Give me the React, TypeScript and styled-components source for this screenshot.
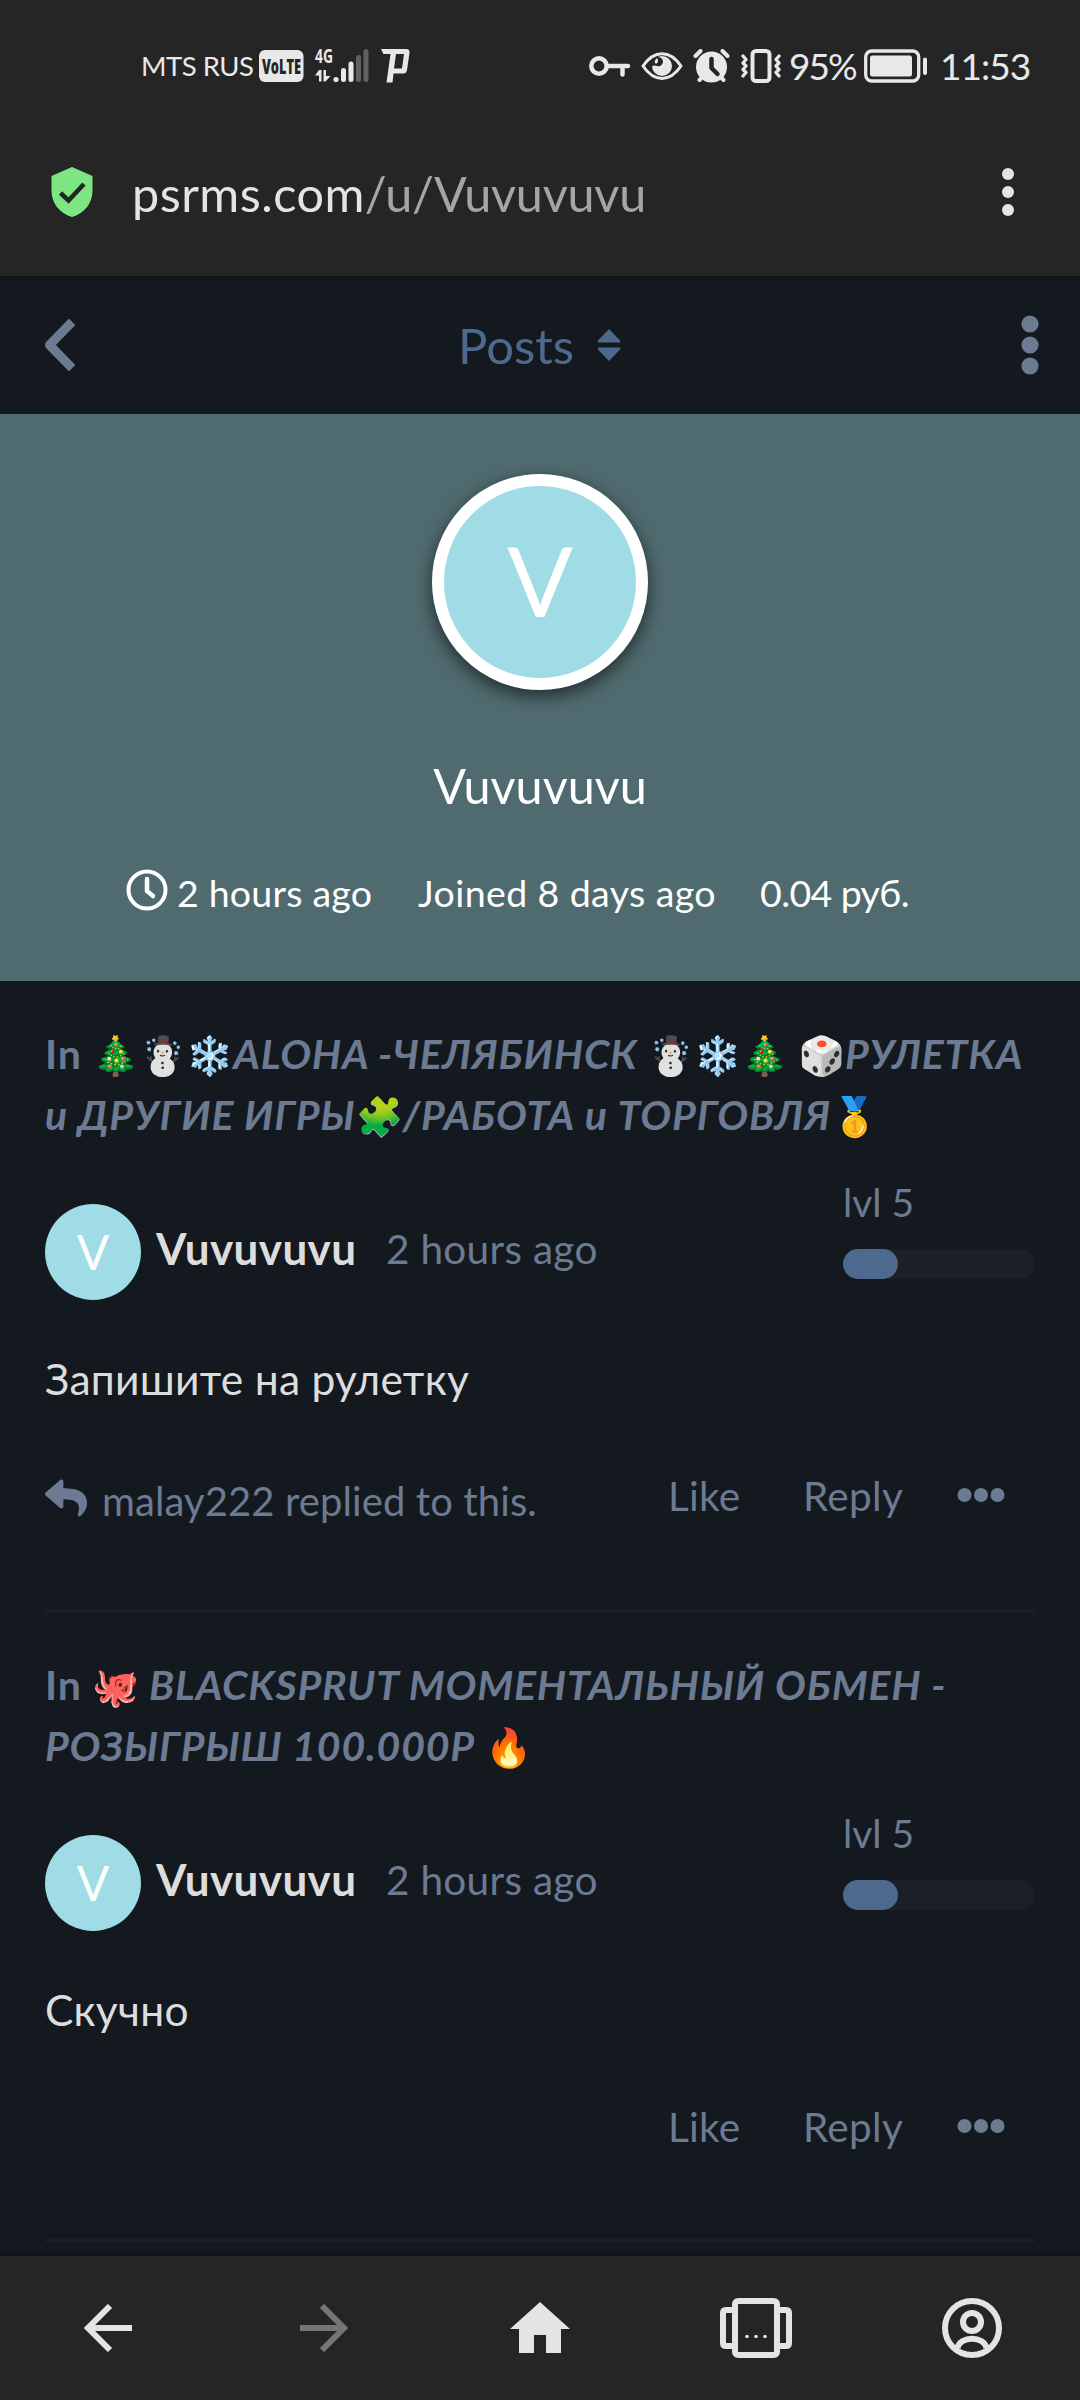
import type { ReactNode } from 'react';
import styled, { createGlobalStyle } from 'styled-components';

const GlobalStyle = createGlobalStyle`
  * {
    box-sizing: border-box;
  }
  body {
    margin: 0;
    background: #14191f;
    font-family: Lato, 'Noto Sans', sans-serif;
  }
  svg {
    display: block;
    flex-shrink: 0;
  }
`;

const Screen = styled.div`
  width: 1080px;
  height: 2400px;
  display: flex;
  flex-direction: column;
  overflow: hidden;
`;

const TopBar = styled.header`
  height: 276px;
  flex-shrink: 0;
  background: #252525;
  box-shadow: 0 0 5px rgba(0, 0, 0, 0.5);
  z-index: 1;
`;

const StatusBar = styled.div`
  height: 132px;
  padding: 0 50px 0 141px;
  display: flex;
  justify-content: space-between;
  align-items: center;
  color: #e8e8e8;
`;

const StatusGroup = styled.div`
  display: flex;
  align-items: center;
`;

const StatusIcons = styled.div`
  margin-right: 7px;
  display: flex;
  align-items: center;
  gap: 10px;
`;

const StatusText = styled.span<{ $size: number; $spacing?: number; $width: number }>`
  width: ${p => p.$width}px;
  font-size: ${p => p.$size}px;
  letter-spacing: ${p => p.$spacing || 0}px;
  line-height: 40px;
  white-space: nowrap;
`;

const AddressBar = styled.div`
  height: 144px;
  padding: 0 60px 0 51px;
  display: flex;
  align-items: flex-start;
`;

const ShieldIcon = styled.svg`
  margin-top: 35px;
`;

const Url = styled.div`
  flex: 1;
  margin: 26px 0 0 39px;
  font-size: 48.5px;
  letter-spacing: 0.5px;
  line-height: 70px;
  color: #e4e4e4;
  span {
    letter-spacing: -0.2px;
    color: #a5a5a5;
  }
`;

const MenuIcon = styled.svg`
  margin-top: 36px;
`;

const Toolbar = styled.nav`
  height: 138px;
  flex-shrink: 0;
  padding: 0 41px 0 42px;
  display: grid;
  grid-template-columns: 1fr auto 1fr;
  align-items: center;
  svg:last-child {
    justify-self: end;
  }
`;

const SectionButton = styled.button`
  border: none;
  background: none;
  padding: 0 1px 0 0;
  display: flex;
  align-items: center;
  gap: 22px;
  font-family: inherit;
  font-size: 49px;
  line-height: 60px;
  color: #4d698e;
`;

const Hero = styled.section`
  height: 567px;
  flex-shrink: 0;
  padding-top: 60px;
  display: flex;
  flex-direction: column;
  align-items: center;
  background: #506b6f;
  color: #fff;
`;

const Avatar = styled.div<{ $large?: boolean }>`
  width: ${p => (p.$large ? 216 : 96)}px;
  height: ${p => (p.$large ? 216 : 96)}px;
  flex-shrink: 0;
  border-radius: 50%;
  border: ${p => (p.$large ? '12px solid #fff' : 'none')};
  box-shadow: ${p => (p.$large ? '0 6px 18px rgba(0, 0, 0, 0.6)' : 'none')};
  background: #a0dce5;
  color: #fff;
  font-size: ${p => (p.$large ? 97 : 48)}px;
  line-height: ${p => (p.$large ? 188 : 95)}px;
  text-align: center;
`;

const HeroName = styled.h1`
  margin: 60px 0 0;
  font-size: 48.5px;
  font-weight: 400;
  line-height: 70px;
`;

const HeroInfo = styled.ul`
  width: 100%;
  margin: 37px 0 0;
  padding: 0 0 0 126px;
  display: flex;
  list-style: none;
  font-size: 37.5px;
  line-height: 60px;
  white-space: nowrap;
`;

const InfoItem = styled.li<{ $width: number; $spacing?: number }>`
  width: ${p => p.$width}px;
  padding-top: 6px;
  letter-spacing: ${p => p.$spacing || 0}px;
  display: flex;
  align-items: flex-start;
  gap: 9px;
  svg {
    margin-top: 6px;
  }
`;

const PostList = styled.main`
  flex: 1;
  min-height: 0;
  padding: 0 45px;
  overflow: hidden;
`;

const PostItem = styled.article`
  height: 630px;
  padding-top: 42px;
  border-bottom: 3px solid #1b1f27;
  color: #6c7b92;
  &:first-child {
    height: 631px;
  }
`;

const Discussion = styled.h3`
  margin: 0;
  font-size: 41px;
  font-weight: 700;
  letter-spacing: 0.8px;
  line-height: 61px;
  white-space: nowrap;
`;

const Emoji = styled.span`
  font-size: 38px;
  font-style: normal;
  letter-spacing: 0;
  line-height: 0;
`;

const PostHeader = styled.div`
  height: 122px;
  margin-top: 33px;
  display: flex;
  align-items: flex-end;
`;

const PostUser = styled.span`
  width: 230px;
  margin: 0 0 22px 15px;
  font-size: 44px;
  font-weight: 700;
  letter-spacing: 0.4px;
  line-height: 60px;
  color: #ddd;
`;

const PostTime = styled.time`
  flex: 1;
  margin-bottom: 21px;
  font-size: 40.5px;
  letter-spacing: 0.3px;
  line-height: 60px;
`;

const Level = styled.div`
  width: 192px;
  align-self: flex-start;
  font-size: 39px;
  line-height: 48px;
`;

const Track = styled.div`
  height: 30px;
  margin-top: 23px;
  border-radius: 15px;
  background: #1b1f27;
`;

const Fill = styled.div`
  height: 100%;
  border-radius: 15px;
  background: #4d698e;
`;

const PostBody = styled.p`
  margin: 49px 0 0;
  font-size: 42.5px;
  letter-spacing: 0.3px;
  line-height: 60px;
  color: #ddd;
`;

const PostFooter = styled.footer`
  height: 66px;
  margin-top: 57px;
  display: flex;
  align-items: flex-start;
  font-size: 40px;
  line-height: 60px;
`;

const RepliedBy = styled.div`
  flex: 1;
  display: flex;
  align-items: flex-start;
  gap: 15px;
  letter-spacing: 0.1px;
  svg {
    margin-top: 11px;
  }
  span {
    margin-top: 5px;
  }
`;

const Action = styled.button<{ $width: number }>`
  width: ${p => p.$width}px;
  border: none;
  background: none;
  padding: 0;
  font: inherit;
  font-size: 40.5px;
  letter-spacing: 0.3px;
  text-align: left;
  color: inherit;
`;

const DotsIcon = styled.svg`
  margin: 21px 30px 0 0;
`;

const BottomBar = styled.footer`
  height: 144px;
  flex-shrink: 0;
  display: grid;
  grid-template-columns: repeat(5, 1fr);
  place-items: center;
  background: #252525;
  box-shadow: 0 0 5px rgba(0, 0, 0, 0.5);
  z-index: 1;
`;

interface Post {
  title: ReactNode;
  text: string;
  repliedBy?: string;
}

const posts: Post[] = [
  {
    title: (
      <>
        In <i><Emoji>🎄☃️❄️</Emoji>ALOHA -ЧЕЛЯБИНСК <Emoji>☃️❄️🎄</Emoji> <Emoji>🎲</Emoji>РУЛЕТКА<br />
        и ДРУГИЕ ИГРЫ<Emoji>🧩</Emoji>/РАБОТА и ТОРГОВЛЯ<Emoji>🥇</Emoji></i>
      </>
    ),
    text: 'Запишите на рулетку',
    repliedBy: 'malay222',
  },
  {
    title: (
      <>
        In <i><Emoji>🐙</Emoji> BLACKSPRUT МОМЕНТАЛЬНЫЙ ОБМЕН -<br />
        РОЗЫГРЫШ 100.000Р <Emoji>🔥</Emoji></i>
      </>
    ),
    text: 'Скучно',
  },
];

const levelProgress = 28.5;

const SignalIcons = () => (
  <svg width="154" height="50" viewBox="0 -7 154 50" fill="#e8e8e8">
    <rect x="0" y="2" width="44.5" height="32" rx="6" />
    <text transform="translate(3 25.5) scale(.65 1)" fontFamily="'Open Sans'" fontSize="20.5" fontWeight="800" fill="#252525" textLength="60" lengthAdjust="spacingAndGlyphs">VoLTE</text>
    <text transform="translate(56 15) scale(.68 1)" fontFamily="'Open Sans'" fontSize="20" fontWeight="700" textLength="26.5" lengthAdjust="spacingAndGlyphs">4G</text>
    <path d="M60 22h2.500v11.500h-2.500v-6h-4zM64.500 22h2.500v6h4.500l-5 5.500h-2z" />
    <circle cx="77" cy="31.500" r="2.600" />
    <rect x="82" y="20" width="5" height="14" rx="2.500" />
    <rect x="89.500" y="13.500" width="5" height="20.500" rx="2.500" />
    <rect x="97" y="7" width="5" height="27" rx="2.500" fill="#616161" />
    <rect x="104.500" y="1" width="5" height="33" rx="2.500" fill="#616161" />
    <path d="M122 1h25q4 0 3.500 4l-2.500 17q-.500 3.500-4 3.500h-9.500l-1 9h-6l4-28.500h-7zM137 6l-2 14.500h8l2-14.500z" fillRule="evenodd" />
  </svg>
);

const KeyIcon = () => (
  <svg width="42" height="34" viewBox="0 0 42 34" fill="none" stroke="#e8e8e8" strokeWidth="4.500">
    <circle cx="10" cy="17" r="7.700" />
    <path d="M18 17h21M33.500 17v8.500" strokeLinecap="round" />
  </svg>
);

const EyeIcon = () => (
  <svg width="42" height="34" viewBox="0 0 42 34">
    <path d="M2 17C13 .5 29 .5 40 17C29 33.500 13 33.500 2 17z" fill="none" stroke="#e8e8e8" strokeWidth="3" strokeLinejoin="round" />
    <circle cx="21" cy="17" r="10" fill="#e8e8e8" />
    <path d="M15.500 8Q22 8 22 13Q21 18 16 17Q12.500 16 11 17.500Q10.500 12 15.500 8z" fill="#252525" />
    <path d="M16 9q2.500 3.500-1 6q-3-2.500 1-6z" fill="#e8e8e8" />
  </svg>
);

const AlarmIcon = () => (
  <svg width="37" height="34" viewBox="0 0 37 34">
    <circle cx="18.500" cy="18" r="15.500" fill="#e8e8e8" />
    <path d="M2.500 7l5-5M34.500 7l-5-5M6.500 31l3-3M30.500 31l-3-3" stroke="#e8e8e8" strokeWidth="4" strokeLinecap="round" />
    <path d="M18.500 10v9l6 6" fill="none" stroke="#252525" strokeWidth="4.500" strokeLinecap="round" strokeLinejoin="round" />
  </svg>
);

const VibrateIcon = () => (
  <svg width="42" height="34" viewBox="0 0 42 34" fill="none" stroke="#e8e8e8">
    <rect x="12.500" y="2" width="17" height="30" rx="3.500" strokeWidth="4" />
    <path d="M3 7l3 3.500l-3 3.500l3 3l-3 3.500l3 3l-3 3.500M39 7l-3 3.500l3 3.500l-3 3l3 3.500l-3 3l3 3.500" strokeWidth="3.300" strokeLinecap="round" strokeLinejoin="round" />
  </svg>
);

const BatteryIcon = () => (
  <svg width="76" height="34" viewBox="0 0 76 34">
    <rect x="1.700" y="2" width="53" height="30" rx="6" fill="none" stroke="#e8e8e8" strokeWidth="3.300" />
    <rect x="6" y="6.500" width="42" height="21" rx="2.500" fill="#e8e8e8" />
    <rect x="59" y="8.500" width="4" height="17.500" rx="2" fill="#e8e8e8" />
  </svg>
);

const PostCard = ({ post }: { post: Post }) => (
  <PostItem>
    <Discussion>{post.title}</Discussion>
    <PostHeader>
      <Avatar>V</Avatar>
      <PostUser>Vuvuvuvu</PostUser>
      <PostTime>2 hours ago</PostTime>
      <Level>
        lvl 5
        <Track>
          <Fill style={{ width: `${levelProgress}%` }} />
        </Track>
      </Level>
    </PostHeader>
    <PostBody>{post.text}</PostBody>
    <PostFooter>
      <RepliedBy>
        {post.repliedBy && (
          <>
            <svg width="42" height="42" viewBox="0 0 512 512" fill="currentColor">
              <path d="M8.300 189.800L184.300 37.900C199.700 24.500 224 35.300 224 56v80.100c160.600 1.800 288 34 288 186.300 0 61.400-39.600 122.300-83.300 154.100-13.700 9.900-33.100-2.500-28.100-18.600C446 312.900 379.100 274.300 224 272.100V360c0 20.700-24.300 31.500-39.700 18.200l-176-152c-11.100-9.600-11.100-26.800 0-36.400z" />
            </svg>
            <span>{post.repliedBy} replied to this.</span>
          </>
        )}
      </RepliedBy>
      <Action $width={135}>Like</Action>
      <Action $width={154}>Reply</Action>
      <DotsIcon width="48" height="16" viewBox="0 0 48 16" fill="currentColor">
        <circle cx="7.500" cy="8" r="7" />
        <circle cx="24" cy="8" r="7" />
        <circle cx="40.500" cy="8" r="7" />
      </DotsIcon>
    </PostFooter>
  </PostItem>
);

const App = () => {
  return (
    <Screen>
      <GlobalStyle />
      <TopBar>
        <StatusBar>
          <StatusGroup>
            <StatusText $size={27.500} $width={118} $spacing={-0.500}>MTS RUS</StatusText>
            <SignalIcons />
          </StatusGroup>
          <StatusGroup>
            <StatusIcons>
              <KeyIcon />
              <EyeIcon />
              <AlarmIcon />
              <VibrateIcon />
            </StatusIcons>
            <StatusText $size={37} $width={75} $spacing={-2}>95%</StatusText>
            <BatteryIcon />
            <StatusText $size={37} $width={90} $spacing={-1}>11:53</StatusText>
          </StatusGroup>
        </StatusBar>
        <AddressBar>
          <ShieldIcon width="42" height="50" viewBox="0 0 42 50">
            <path d="M21 0L41.500 9V24C41.500 36 33 47 21 50C9 47 .500 36 .500 24V9z" fill="#7de683" />
            <path d="M9.500 26l8 7.500L33 17" fill="none" stroke="#252525" strokeWidth="4.500" />
          </ShieldIcon>
          <Url>psrms.com<span>/u/Vuvuvuvu</span></Url>
          <MenuIcon width="24" height="48" viewBox="0 0 24 48" fill="#e4e4e4">
            <circle cx="12" cy="6" r="6" />
            <circle cx="12" cy="24" r="6" />
            <circle cx="12" cy="42" r="6" />
          </MenuIcon>
        </AddressBar>
      </TopBar>
      <Toolbar>
        <svg width="34" height="52" viewBox="0 0 34 52" fill="none">
          <path d="M27 6L7.500 26L27 46" stroke="#6c7b92" strokeWidth="9" strokeLinecap="square" strokeLinejoin="round" />
        </svg>
        <SectionButton>
          Posts
          <svg width="26" height="34" viewBox="0 0 26 34" fill="currentColor">
            <path d="M13 1l11 11.500q1 2-1 2H3q-2 0-1-2zM13 33l11-11.500q1-2-1-2H3q-2 0-1 2z" />
          </svg>
        </SectionButton>
        <svg width="18" height="60" viewBox="0 0 18 60" fill="#6c7b92">
          <circle cx="9" cy="9" r="8.600" />
          <circle cx="9" cy="30" r="8.600" />
          <circle cx="9" cy="51" r="8.600" />
        </svg>
      </Toolbar>
      <Hero>
        <Avatar $large>V</Avatar>
        <HeroName>Vuvuvuvu</HeroName>
        <HeroInfo>
          <InfoItem $width={292} $spacing={0.200}>
            <svg width="42" height="42" viewBox="0 0 42 42" fill="none" stroke="#fff">
              <circle cx="21" cy="21" r="18.500" strokeWidth="4" />
              <path d="M21 10v12l6 5" strokeWidth="4.500" strokeLinecap="round" />
            </svg>
            2 hours ago
          </InfoItem>
          <InfoItem $width={342} $spacing={0.400}>Joined 8 days ago</InfoItem>
          <InfoItem $width={160} $spacing={-0.600}>0.04 руб.</InfoItem>
        </HeroInfo>
      </Hero>
      <PostList>
        {posts.map(post => (
          <PostCard key={post.text} post={post} />
        ))}
      </PostList>
      <BottomBar>
        <svg width="48" height="48" viewBox="0 0 48 48" fill="none" stroke="#e4e4e4" strokeWidth="6">
          <path d="M26 2L4 24L26 46M4 24H48" />
        </svg>
        <svg width="48" height="48" viewBox="0 0 48 48" fill="none" stroke="#757575" strokeWidth="6">
          <path d="M22 2L44 24L22 46M44 24H0" />
        </svg>
        <svg width="60" height="52" viewBox="0 0 60 52" fill="#e4e4e4">
          <path d="M30 0L60 27H51V51H36V33H24V51H9V27H0z" />
        </svg>
        <svg width="72" height="60" viewBox="0 0 72 60" fill="none" stroke="#e4e4e4" strokeWidth="6">
          <rect x="15" y="3" width="42" height="54" rx="3" />
          <path d="M15 12H6q-3 0-3 3V45q0 3 3 3H15M57 12H66q3 0 3 3V45q0 3-3 3H57" />
          <g fill="#e4e4e4" stroke="none">
            <circle cx="27" cy="38.500" r="1.800" />
            <circle cx="36" cy="38.500" r="1.800" />
            <circle cx="45" cy="38.500" r="1.800" />
          </g>
        </svg>
        <svg width="60" height="60" viewBox="0 0 60 60" fill="none" stroke="#e4e4e4" strokeWidth="6">
          <circle cx="30" cy="30" r="27" />
          <circle cx="30" cy="24" r="9" />
          <path d="M15.500 50C18 37.500 42 37.500 44.500 50" />
        </svg>
      </BottomBar>
    </Screen>
  );
};

export default App;
